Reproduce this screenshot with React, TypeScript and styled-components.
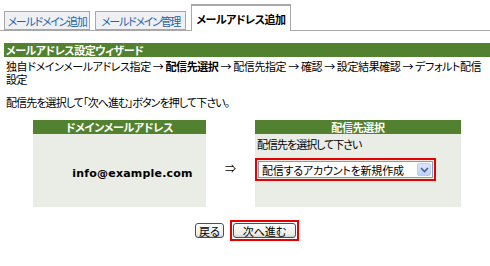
import React from "react";
import styled, { createGlobalStyle } from "styled-components";

const Global = createGlobalStyle`
  html, body { margin: 0; padding: 0; background: #ffffff; }
  body {
    font-family: "Noto Sans CJK JP", "Liberation Sans", sans-serif;
    font-size: 11px;
    color: #000;
    font-feature-settings: "palt";
  }
`;

const Page = styled.div`
  width: 490px;
  height: 266px;
  overflow: hidden;
  padding-top: 4px;
  box-sizing: border-box;
`;

const TabBar = styled.div`
  display: flex;
  align-items: flex-end;
  gap: 5px;
  padding-left: 4px;
  height: 26px;
  border-bottom: 1px solid #a8a8a8;
`;

const Tab = styled.div<{ $active?: boolean; $w: number }>`
  box-sizing: border-box;
  width: ${(p) => p.$w}px;
  height: ${(p) => (p.$active ? "27px" : "19px")};
  margin-bottom: ${(p) => (p.$active ? "-1px" : "0")};
  display: flex;
  align-items: center;
  justify-content: center;
  border: 1px solid #a8a8a8;
  border-top-width: ${(p) => (p.$active ? "2px" : "1px")};
  border-bottom: ${(p) => (p.$active ? "none" : "1px solid #a8a8a8")};
  background: ${(p) => (p.$active ? "#ffffff" : "#eef0f3")};
  color: ${(p) => (p.$active ? "#000000" : "#2b5fa8")};
  font-weight: ${(p) => (p.$active ? "bold" : "normal")};
  font-size: 11px;
  line-height: 12px;
  letter-spacing: ${(p) => (p.$active ? "-0.5px" : "-1.3px")};
  white-space: nowrap;
  padding-top: 1px;
`;

const TitleBar = styled.div`
  margin: 12px 0 0 4px;
  height: 14px;
  background: #52822f;
  color: #ffffff;
  font-weight: bold;
  font-size: 11px;
  line-height: 14px;
  padding-left: 2px;
  letter-spacing: -0.5px;
  white-space: nowrap;
`;

const Steps = styled.div`
  margin: 3px 0 0 6px;
  line-height: 13px;
  font-size: 11px;
  letter-spacing: -0.4px;
  white-space: nowrap;
  b { font-weight: bold; }
`;

const Instruction = styled.div`
  margin: 10px 0 0 6px;
  line-height: 12px;
  letter-spacing: -0.9px;
  white-space: nowrap;
`;

const PanelRow = styled.div`
  display: flex;
  justify-content: center;
  align-items: stretch;
  margin-top: 12px;
  padding-left: 4px;
`;

const Panel = styled.div<{ $w: number }>`
  width: ${(p) => p.$w}px;
  height: 87px;
  display: flex;
  flex-direction: column;
  background: #e9ede6;
`;

const PanelHead = styled.div`
  height: 14px;
  background: #52822f;
  color: #ffffff;
  font-weight: bold;
  text-align: center;
  line-height: 14px;
  letter-spacing: -0.3px;
`;

const PanelBody = styled.div<{ $center?: boolean }>`
  flex: 1;
  display: flex;
  flex-direction: column;
  justify-content: ${(p) => (p.$center ? "center" : "flex-start")};
  align-items: ${(p) => (p.$center ? "center" : "stretch")};
  padding-top: ${(p) => (p.$center ? "0" : "4px")};
`;

const Email = styled.div`
  font-family: "DejaVu Sans", "Liberation Sans", sans-serif;
  font-weight: bold;
  font-size: 11px;
  letter-spacing: 0.2px;
  margin: 6px 0 0 26px;
`;

const Arrow = styled.div`
  width: 49px;
  display: flex;
  align-items: center;
  justify-content: center;
  padding-top: 8px;
  font-size: 11px;
`;

const Hint = styled.div`
  padding-left: 2px;
  line-height: 12px;
  letter-spacing: -1px;
`;

const RedFrame = styled.div<{ $mt?: number }>`
  display: inline-flex;
  border: 2px solid #e60000;
  padding: 1px;
  margin-top: ${(p) => p.$mt ?? 0}px;
`;

const SelectBox = styled.div`
  width: 175px;
  height: 17px;
  box-sizing: border-box;
  border: 1px solid #7f9db9;
  background: #ffffff;
  display: flex;
  align-items: center;
  justify-content: space-between;
  padding-left: 3px;
  padding-right: 1px;
`;

const SelectText = styled.span`
  font-size: 11px;
  line-height: 12px;
  letter-spacing: -0.2px;
  white-space: nowrap;
`;

const DropBtn = styled.div`
  width: 14px;
  height: 13px;
  box-sizing: border-box;
  border: 1px solid #b8cdf6;
  background: linear-gradient(#dce7fd, #bcd0f8);
  display: flex;
  align-items: center;
  justify-content: center;
  border-radius: 2px;
`;

const ButtonRow = styled.div`
  display: flex;
  justify-content: center;
  align-items: center;
  gap: 6px;
  margin-top: 13px;
  padding-left: 4px;
`;

const Btn = styled.button<{ $w: number }>`
  width: ${(p) => p.$w}px;
  height: 15px;
  padding: 0;
  box-sizing: border-box;
  border: 1px solid #2f5680;
  border-radius: 3px;
  background: linear-gradient(#ffffff, #ecebe6 80%, #d6d0c5);
  font-family: "Noto Sans CJK JP", sans-serif;
  font-size: 11px;
  line-height: 12px;
  color: #000;
  display: flex;
  align-items: center;
  justify-content: center;
  font-feature-settings: "palt";
`;

export default function App() {
  return (
    <>
      <Global />
      <Page>
        <TabBar>
          <Tab $w={86}>メールドメイン追加</Tab>
          <Tab $w={91}>メールドメイン管理</Tab>
          <Tab $w={100} $active>メールアドレス追加</Tab>
        </TabBar>
        <TitleBar>メールアドレス設定ウィザード</TitleBar>
        <Steps>
          独自ドメインメールアドレス指定 → <b>配信先選択</b> → 配信先指定 → 確認 → 設定結果確認 → デフォルト配信
          <br />
          設定
        </Steps>
        <Instruction>配信先を選択して「次へ進む」ボタンを押して下さい。</Instruction>
        <PanelRow>
          <Panel $w={173}>
            <PanelHead>ドメインメールアドレス</PanelHead>
            <PanelBody $center>
              <Email>info@example.com</Email>
            </PanelBody>
          </Panel>
          <Arrow>⇒</Arrow>
          <Panel $w={206}>
            <PanelHead>配信先選択</PanelHead>
            <PanelBody>
              <Hint>配信先を選択して下さい</Hint>
              <div>
                <RedFrame $mt={8}>
                  <SelectBox>
                    <SelectText>配信するアカウントを新規作成</SelectText>
                    <DropBtn>
                      <svg width="9" height="6" viewBox="0 0 9 6">
                        <path d="M1 1 L4.5 4.5 L8 1" fill="none" stroke="#4d6185" strokeWidth="1.6" />
                      </svg>
                    </DropBtn>
                  </SelectBox>
                </RedFrame>
              </div>
            </PanelBody>
          </Panel>
        </PanelRow>
        <ButtonRow>
          <Btn $w={29}>戻る</Btn>
          <RedFrame>
            <Btn $w={63}>次へ進む</Btn>
          </RedFrame>
        </ButtonRow>
      </Page>
    </>
  );
}
